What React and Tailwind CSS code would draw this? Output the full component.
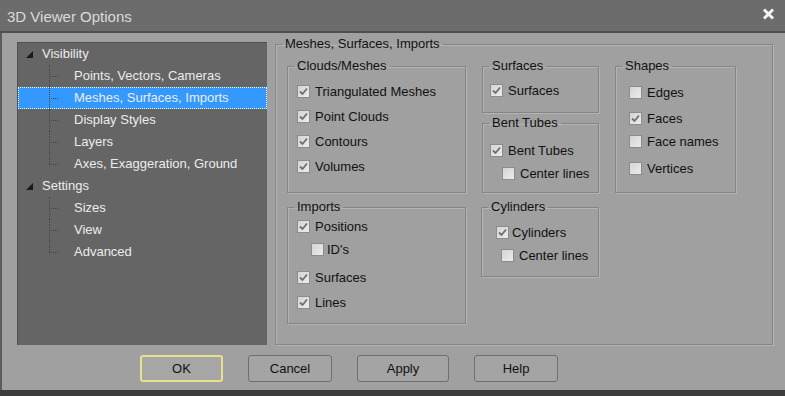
import React from "react";

const font = { fontFamily: '"Liberation Sans", Arial, sans-serif' };

function Check({ checked }) {
  return (
    <span className="w-[13px] h-[13px] shrink-0 border border-[#8c8c8c] bg-gradient-to-br from-[#d4d4d4] to-[#ececec] flex items-center justify-center">
      {checked && (
        <svg width="9" height="9" viewBox="0 0 9 9">
          <path d="M1 4.5 L3.5 7 L8 1.5" fill="none" stroke="#6e6e6e" strokeWidth="1.8" />
        </svg>
      )}
    </span>
  );
}

function Row({ label, checked, className = "" }) {
  return (
    <div className={"flex items-center h-[20px] gap-[5px] " + className}>
      <Check checked={checked} />
      <span className="text-[13px] text-[#111] leading-none">{label}</span>
    </div>
  );
}

function Group({ title, className = "", children }) {
  return (
    <fieldset className={"border border-[#858585] shadow-[1px_1px_0_#b3b3b3,inset_1px_1px_0_#b3b3b3] " + className}>
      <legend className="ml-[6px] px-[3px] text-[13px] leading-[16px] text-[#111]">{title}</legend>
      {children}
    </fieldset>
  );
}

function TreeChild({ label, selected, last }) {
  return (
    <div className={"relative flex items-center h-[22px] " + (selected ? "bg-[#3399ff] outline-1 outline-dotted outline-white -outline-offset-1" : "")}>
      <span className="relative w-[9px] self-stretch ml-[31px]">
        <span className={"absolute left-0 top-0 border-l border-dotted border-[#454545] " + (last ? "h-1/2" : "h-full")} />
        <span className="absolute left-0 top-1/2 w-[9px] border-t border-dotted border-[#454545]" />
      </span>
      <span className="ml-[16px] text-[13px] text-[#ececec]">{label}</span>
    </div>
  );
}

function TreeParent({ label }) {
  return (
    <div className="flex items-center h-[22px]">
      <svg width="7" height="7" viewBox="0 0 7 7" className="ml-[8px]">
        <path d="M7 0 L7 7 L0 7 Z" fill="#1a1a1a" />
      </svg>
      <span className="ml-[9px] text-[13px] text-[#ececec]">{label}</span>
    </div>
  );
}

export default function App() {
  return (
    <div className="w-[785px] h-[396px] flex flex-col bg-[#a0a0a0] overflow-hidden" style={font}>
      <div className="h-[31px] bg-[#6c6c6c] flex items-center justify-between pl-[7px] pr-[10px] pt-[3px] shrink-0">
        <span className="text-[15px] text-[#dadada]">3D Viewer Options</span>
        <svg width="13" height="12" viewBox="0 0 13 12" className="-mt-[6px]">
          <path d="M2 1.5 L11 10.5 M11 1.5 L2 10.5" stroke="#f4f4f4" strokeWidth="3" />
        </svg>
      </div>
      <div className="h-[2px] bg-[#4f4f4f] shrink-0" />
      <div className="flex-1 flex flex-col border-l-2 border-[#5c5c5c] bg-[#a0a0a0]">
        <div className="flex pt-[9px] pl-[15px]">
          <div className="w-[250px] h-[303px] bg-[#656565] border-t border-l border-[#505050]">
            <TreeParent label="Visibility" />
            <TreeChild label="Points, Vectors, Cameras" />
            <TreeChild label="Meshes, Surfaces, Imports" selected />
            <TreeChild label="Display Styles" />
            <TreeChild label="Layers" />
            <TreeChild label="Axes, Exaggeration, Ground" last />
            <TreeParent label="Settings" />
            <TreeChild label="Sizes" />
            <TreeChild label="View" />
            <TreeChild label="Advanced" last />
          </div>
          <Group title="Meshes, Surfaces, Imports" className="ml-[8px] -mt-[6px] w-[498px] h-[309px]">
            <div className="flex pt-[6px] pl-[11px] gap-[16px]">
              <div className="w-[179px] flex flex-col gap-[6px]">
                <Group title="Clouds/Meshes" className="h-[135px]">
                  <div className="flex flex-col gap-[5px] pt-[7px] pl-[9px]">
                    <Row label="Triangulated Meshes" checked />
                    <Row label="Point Clouds" checked />
                    <Row label="Contours" checked />
                    <Row label="Volumes" checked />
                  </div>
                </Group>
                <Group title="Imports" className="h-[125px]">
                  <div className="flex flex-col pl-[9px]">
                    <Row label="Positions" checked className="mt-[1px]" />
                    <Row label="ID's" className="mt-[3px] ml-[14px] !gap-[3px]" />
                    <Row label="Surfaces" checked className="mt-[8px]" />
                    <Row label="Lines" checked className="mt-[5px]" />
                  </div>
                </Group>
              </div>
              <div className="w-[117px] flex flex-col">
                <Group title="Surfaces" className="h-[55px]">
                  <Row label="Surfaces" checked className="mt-[6px] ml-[7px]" />
                </Group>
                <Group title="Bent Tubes" className="h-[78px] mt-[2px]">
                  <Row label="Bent Tubes" checked className="mt-[9px] ml-[7px]" />
                  <Row label="Center lines" className="mt-[3px] ml-[19px]" />
                </Group>
                <Group title="Cylinders" className="h-[78px] mt-[6px] -ml-[1px]">
                  <Row label="Cylinders" checked className="mt-[7px] ml-[14px] !gap-[3px]" />
                  <Row label="Center lines" className="mt-[3px] ml-[19px]" />
                </Group>
              </div>
              <div className="w-[121px]">
                <Group title="Shapes" className="h-[135px]">
                  <div className="flex flex-col pl-[13px]">
                    <Row label="Edges" className="mt-[8px]" />
                    <Row label="Faces" checked className="mt-[6px]" />
                    <Row label="Face names" className="mt-[3px]" />
                    <Row label="Vertices" className="mt-[7px]" />
                  </div>
                </Group>
              </div>
            </div>
          </Group>
        </div>
        <div className="flex pl-[138px] pt-[10px] gap-[25px]">
          <button className="w-[83px] h-[27px] rounded-[3px] border-2 border-[#eadf8e] bg-[#a6a6a6] text-[13px] text-[#111]">OK</button>
          <button className="w-[84px] h-[27px] rounded-[3px] border border-[#6f6f6f] bg-[#a4a4a4] text-[13px] text-[#111]">Cancel</button>
          <button className="w-[92px] h-[27px] rounded-[3px] border border-[#6f6f6f] bg-[#a4a4a4] text-[13px] text-[#111]">Apply</button>
          <button className="w-[84px] h-[27px] rounded-[3px] border border-[#6f6f6f] bg-[#a4a4a4] text-[13px] text-[#111]">Help</button>
        </div>
      </div>
      <div className="h-[6px] bg-[#3c3c3c] shrink-0" />
    </div>
  );
}
